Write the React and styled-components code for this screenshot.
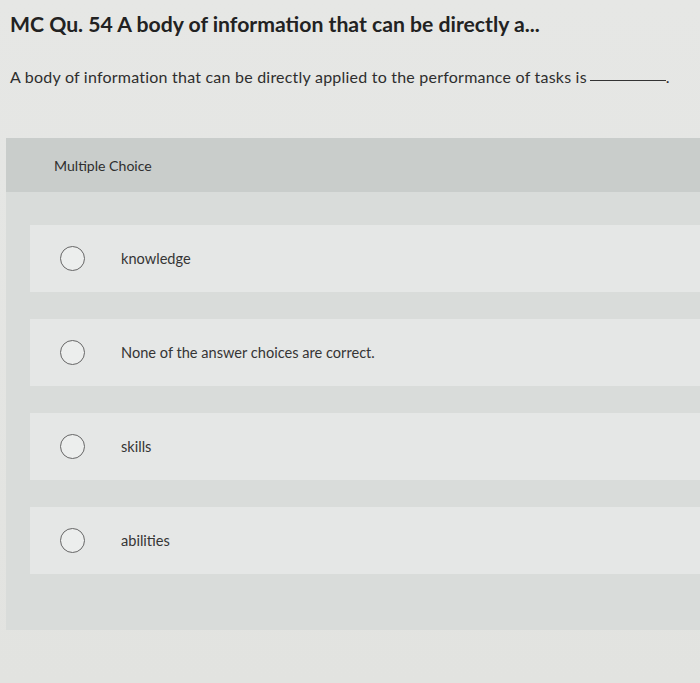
import React from 'react'
import styled, { createGlobalStyle } from 'styled-components'

const GlobalStyle = createGlobalStyle`
  html, body {
    margin: 0;
    padding: 0;
    background: #e3e4e1;
  }
  body {
    font-family: Lato, "Open Sans", "Liberation Sans", sans-serif;
  }
`

const Page = styled.div`
  width: 700px;
  height: 683px;
  overflow: hidden;
  background: linear-gradient(180deg, #e6e7e5 0%, #e2e3e0 100%);
  padding-top: 11px;
  box-sizing: border-box;
`

const Title = styled.h1`
  margin: 0 0 0 10px;
  font-size: 21.2px;
  font-weight: 700;
  line-height: 26px;
  color: #222;
  white-space: nowrap;
`

const Prompt = styled.p`
  margin: 30px 0 0 10px;
  font-size: 16px;
  letter-spacing: 0.22px;
  line-height: 20px;
  color: #2e2e2e;
  white-space: nowrap;
`

const Blank = styled.span`
  display: inline-block;
  width: 76px;
  margin-left: 3px;
  border-bottom: 1px solid #333;
  transform: translateY(-2px);
`

const Panel = styled.section`
  margin: 51px 0 0 6px;
  background: #d9dcda;
  padding-bottom: 56px;
`

const PanelHead = styled.div`
  height: 54px;
  display: flex;
  align-items: center;
  padding-left: 48px;
  background: #c9cdcb;
  font-size: 14.1px;
  color: #2f2f2f;
`

const Choices = styled.div`
  display: flex;
  flex-direction: column;
  gap: 27px;
  padding: 33px 0 0 24px;
`

const Choice = styled.label`
  height: 67px;
  display: flex;
  align-items: center;
  background: #e5e7e6;
  cursor: pointer;
`

const Radio = styled.span`
  width: 25px;
  height: 25px;
  margin-left: 30px;
  border: 1.5px solid #666;
  border-radius: 50%;
  box-sizing: border-box;
  background: #eceeed;
  flex-shrink: 0;
`

const ChoiceText = styled.span`
  margin-left: 36px;
  font-size: 14.6px;
  color: #353535;
`

const options = [
  'knowledge',
  'None of the answer choices are correct.',
  'skills',
  'abilities',
]

export default function App() {
  return (
    <Page>
      <GlobalStyle />
      <Title>MC Qu. 54 A body of information that can be directly a...</Title>
      <Prompt>
        A body of information that can be directly applied to the performance of tasks is<Blank />.
      </Prompt>
      <Panel>
        <PanelHead>Multiple Choice</PanelHead>
        <Choices>
          {options.map((o) => (
            <Choice key={o}>
              <Radio />
              <ChoiceText>{o}</ChoiceText>
            </Choice>
          ))}
        </Choices>
      </Panel>
    </Page>
  )
}
